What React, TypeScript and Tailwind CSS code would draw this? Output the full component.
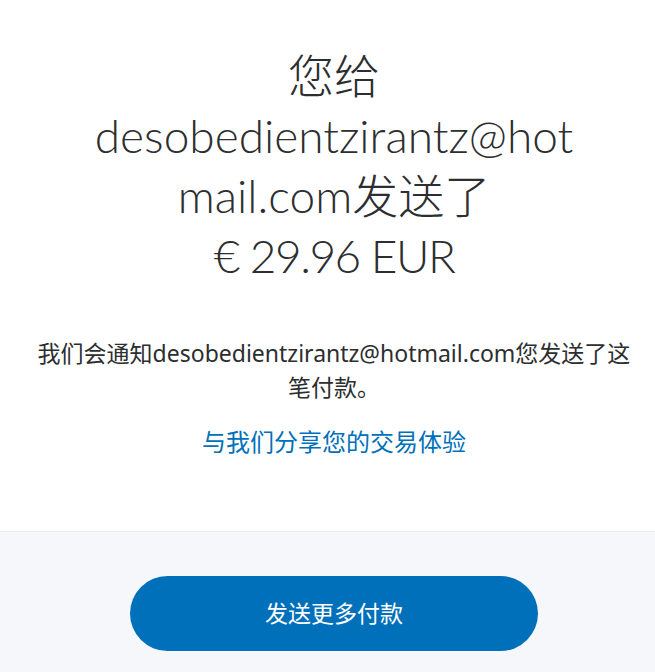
const App = () => {
  return (
    <div className="min-h-[672px] bg-[#f5f7fa] pl-[13px] font-['Lato','Noto_Sans_CJK_SC',sans-serif]">
      <div className="bg-white pt-[46px] pb-[72px] border-b border-[#eaeced] text-center -ml-[13px] pl-[13px]">
        <h1 className="text-[46px] leading-[60px] font-light text-[#2c2e2f]">
          您给
          <br />
          desobedientzirantz@hot
          <br />
          mail.com发送了
          <br />
          <span className="tracking-[-1.5px]">€ 29.96 EUR</span>
        </h1>
        <p className="mt-[50px] text-[23px] leading-[34px] text-[#2c2e2f] font-['Noto_Sans','Noto_Sans_CJK_SC',sans-serif]">
          我们会通知desobedientzirantz@hotmail.com您发送了这
          <br />
          笔付款。
        </p>
        <div className="mt-[21px] text-[24px] leading-[34px] font-['Noto_Sans','Noto_Sans_CJK_SC',sans-serif]">
          <a href="#" className="text-[#0070ba]">
            与我们分享您的交易体验
          </a>
        </div>
      </div>
      <div className="flex justify-center pt-[44px] pb-6">
        <button
          type="button"
          className="w-[408px] h-[75px] rounded-full bg-[#0070ba] text-white text-[23px] font-['Noto_Sans','Noto_Sans_CJK_SC',sans-serif]"
        >
          发送更多付款
        </button>
      </div>
    </div>
  );
};

export default App;
